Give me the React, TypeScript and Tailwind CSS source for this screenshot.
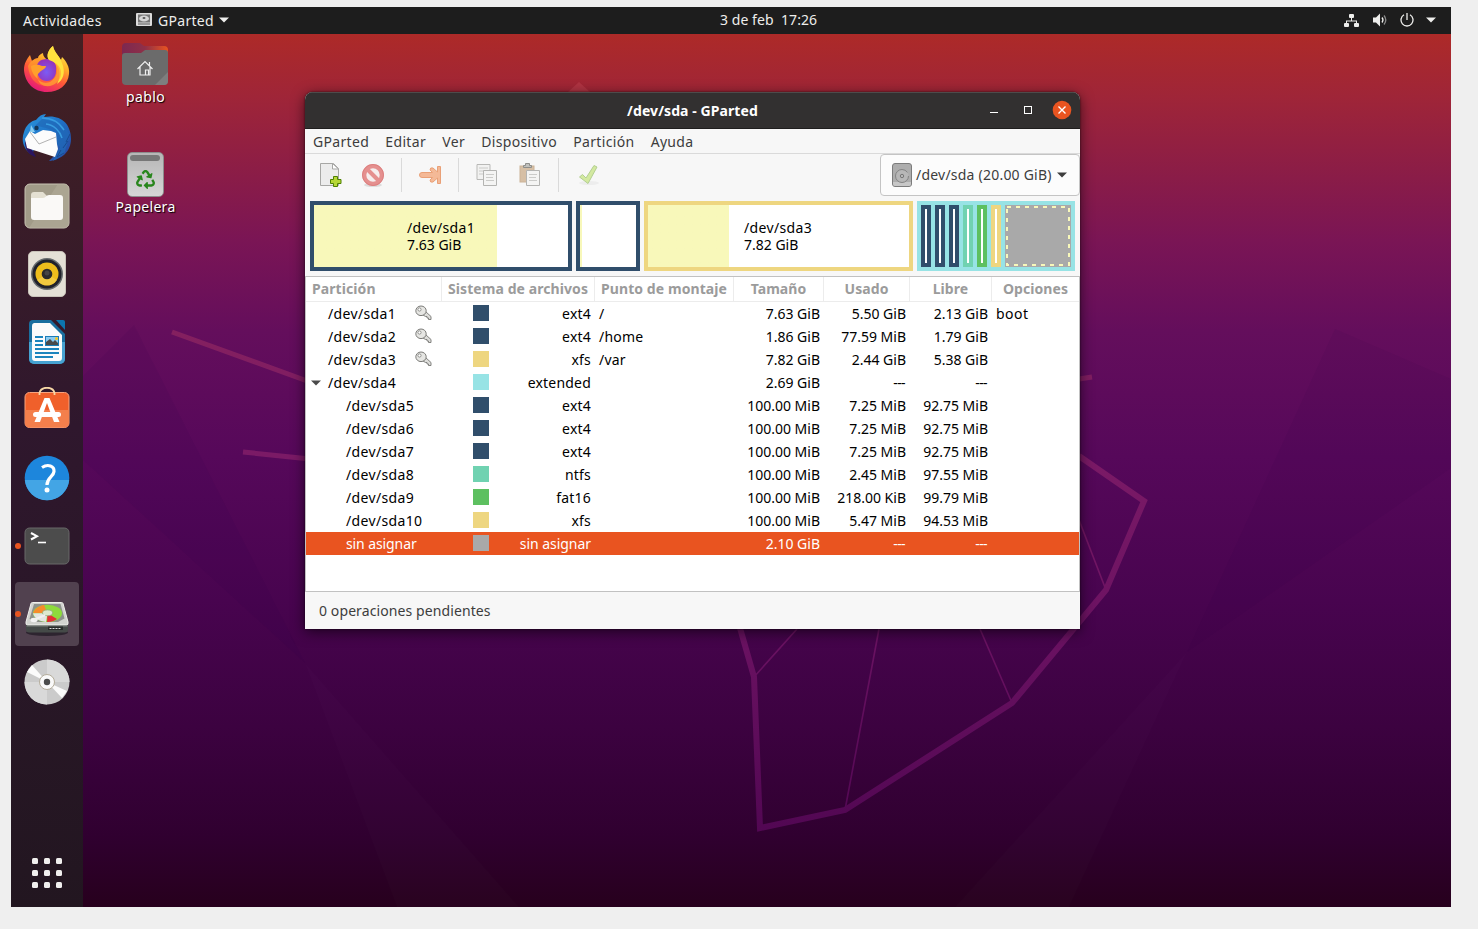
import React from "react";
import { FaRecycle } from "react-icons/fa";

const NAVY = "#304e6b";

type Row = {
  name: string;
  child?: boolean;
  locked?: boolean;
  open?: boolean;
  color: string;
  fs: string;
  mount?: string;
  size: string;
  used: string;
  free: string;
  flags?: string;
};

const rows: Row[] = [
  { name: "/dev/sda1", locked: true, color: NAVY, fs: "ext4", mount: "/", size: "7.63 GiB", used: "5.50 GiB", free: "2.13 GiB", flags: "boot" },
  { name: "/dev/sda2", locked: true, color: NAVY, fs: "ext4", mount: "/home", size: "1.86 GiB", used: "77.59 MiB", free: "1.79 GiB" },
  { name: "/dev/sda3", locked: true, color: "#eed680", fs: "xfs", mount: "/var", size: "7.82 GiB", used: "2.44 GiB", free: "5.38 GiB" },
  { name: "/dev/sda4", open: true, color: "#97e3e5", fs: "extended", size: "2.69 GiB", used: "---", free: "---" },
  { name: "/dev/sda5", child: true, color: NAVY, fs: "ext4", size: "100.00 MiB", used: "7.25 MiB", free: "92.75 MiB" },
  { name: "/dev/sda6", child: true, color: NAVY, fs: "ext4", size: "100.00 MiB", used: "7.25 MiB", free: "92.75 MiB" },
  { name: "/dev/sda7", child: true, color: NAVY, fs: "ext4", size: "100.00 MiB", used: "7.25 MiB", free: "92.75 MiB" },
  { name: "/dev/sda8", child: true, color: "#70d2b1", fs: "ntfs", size: "100.00 MiB", used: "2.45 MiB", free: "97.55 MiB" },
  { name: "/dev/sda9", child: true, color: "#5dc060", fs: "fat16", size: "100.00 MiB", used: "218.00 KiB", free: "99.79 MiB" },
  { name: "/dev/sda10", child: true, color: "#eed680", fs: "xfs", size: "100.00 MiB", used: "5.47 MiB", free: "94.53 MiB" },
];

function Caret({ className }: { className?: string }) {
  return (
    <svg width="10" height="6" viewBox="0 0 10 6" className={className}>
      <path d="M0 .5h10L5 5.5z" fill="currentColor" />
    </svg>
  );
}

function Wallpaper() {
  return (
    <svg className="absolute inset-0" width="1440" height="900" viewBox="11 7 1440 900">
      <defs>
        <linearGradient id="sky" x1="0" y1="0" x2="0" y2="1">
          <stop offset="0.03" stopColor="#ad2a28" />
          <stop offset="0.1" stopColor="#9f2538" />
          <stop offset="0.18" stopColor="#8c1d46" />
          <stop offset="0.26" stopColor="#7a1555" />
          <stop offset="0.36" stopColor="#640e5c" />
          <stop offset="0.5" stopColor="#56085a" />
          <stop offset="0.66" stopColor="#48044f" />
          <stop offset="0.8" stopColor="#3c0240" />
          <stop offset="0.92" stopColor="#300030" />
          <stop offset="1" stopColor="#27001d" />
        </linearGradient>
        <linearGradient id="outline" gradientUnits="userSpaceOnUse" x1="0" y1="330" x2="0" y2="830">
          <stop offset="0" stopColor="#84205f" />
          <stop offset=".25" stopColor="#7b1a66" />
          <stop offset=".6" stopColor="#6b1262" />
          <stop offset="1" stopColor="#520753" />
        </linearGradient>
      </defs>
      <rect x="11" y="7" width="1440" height="900" fill="url(#sky)" />
      <path d="M134 325L83 376V460L305 663z" fill="#2b0048" opacity=".08" />
      <path d="M1335 329L1451 379V468L1187 652z" fill="#2b0048" opacity=".07" />
      <path d="M305 663L519 907H397z" fill="#ffffff" opacity=".01" />
      <path d="M1187 652L1069 907H955z" fill="#ffffff" opacity=".01" />
      <path d="M568 92L579 82L590 92z" fill="#b63a49" opacity=".7" />
      <g fill="none" stroke="url(#outline)" strokeLinejoin="miter">
        <path d="M172 332L310 382M243 452L310 459" strokeWidth="5" />
        <path d="M1079 379L1092 377" strokeWidth="5" />
        <path d="M1079 456L1144 501L1106 590L1012 703L845 810L760 828L754 677L740 628" strokeWidth="6" />
        <path d="M1079 520L1106 590M980 629L1012 703M879 629L845 810M797 629L754 677" strokeWidth="1.6" />
      </g>
    </svg>
  );
}

function Firefox() {
  return (
    <svg width="48" height="48" viewBox="0 0 48 48">
      <defs>
        <linearGradient id="ff1" x1=".8" y1="0" x2=".3" y2="1">
          <stop offset="0" stopColor="#fff44f" />
          <stop offset=".35" stopColor="#ffb02a" />
          <stop offset=".62" stopColor="#ff5a36" />
          <stop offset="1" stopColor="#e3157c" />
        </linearGradient>
        <radialGradient id="ff2" cx=".5" cy=".6" r=".6">
          <stop offset="0" stopColor="#7b5cf5" />
          <stop offset="1" stopColor="#9530b8" />
        </radialGradient>
        <linearGradient id="ff3" x1="0" y1="0" x2="0" y2="1">
          <stop offset="0" stopColor="#ff9d28" />
          <stop offset="1" stopColor="#ff4a45" />
        </linearGradient>
      </defs>
      <path d="M1 24C1 17 4 13 7 9L9 15C11 13 13 12 15 12C15 10 17 8 20 7C20 10 22 13 26 14C23 10 25 4 30 0C31 6 35 9 38 14L39 11C43 15 47 21 46 28C45 39 36 46 24 46C11 46 2 37 1 24z" fill="url(#ff1)" />
      <path d="M5 20C8 14 12 13 15 13L26 14C34 14 38 20 38 27C37 35 31 40 23 40C12 40 6 31 5 20z" fill="url(#ff3)" />
      <path d="M14 23C13 17 17 13 24 13C31 13 34 18 33 25C33 31 29 35 24 35C18 35 14 31 14 23z" fill="url(#ff2)" />
      <path d="M8 20C12 18 16 19 19 20L23 20C23 23 18 24 16 27C14 28 14 31 15 33C11 30 8 25 8 20z" fill="#ffa02b" />
      <path d="M26 14C23 10 25 4 30 0C31 6 37 10 39 17C43 27 40 34 34 38C39 29 37 17 26 14z" fill="#ffe33e" />
      <path d="M32 17C36 24 34 32 27 36C22 38 17 36 15 33C16 39 23 42 30 39C41 34 40 21 32 17z" fill="#ffa930" opacity=".7" />
    </svg>
  );
}

function Thunderbird() {
  return (
    <svg width="50" height="50" viewBox="0 0 50 50">
      <defs>
        <linearGradient id="tb" x1="0" y1="0" x2="1" y2="1">
          <stop offset="0" stopColor="#2b9ae0" />
          <stop offset=".5" stopColor="#1f6fc4" />
          <stop offset="1" stopColor="#2b3f98" />
        </linearGradient>
      </defs>
      <path d="M14 7C17 3 20 1 24 1L22 4C38 1 49 10 49 26C49 38 40 47 27 48L32 43L12 36L10 42C1 36-1 27 2 19C4 12 9 8 14 7z" fill="url(#tb)" />
      <path d="M3 28C3 38 7 42 14 44L9 35z" fill="#2a1560" />
      <path d="M12 14C14 12 22 14 27 16L35 19V31L38 34L33 44L31 48L42 41L48 22L43 14L30 8L20 6z" fill="#2069b8" opacity=".75" />
      <path d="M8 18L3 26L5 35L33 44L36 36L35 31L34 20L29 18L21 17L13 21z" fill="#fcfcfc" />
      <path d="M8 19L17 31L34 24" fill="none" stroke="#a9a9a9" strokeWidth=".9" />
      <path d="M39 37L35 44L42 40M41 35L46 28M44 29L48 21" fill="none" stroke="#194a91" strokeWidth="1" />
      <circle cx="14.500" cy="15" r="2.200" fill="#153657" />
      <path d="M8 19L9 12L13 19z" fill="#89cdf0" />
      <path d="M20 5C30 5 37 9 42 17M24 11C32 12 38 18 40 25" stroke="#389ce0" strokeWidth="1.500" fill="none" />
    </svg>
  );
}

function Files() {
  return (
    <svg width="46" height="46" viewBox="0 0 46 46">
      <rect x="1" y="1" width="44" height="44" rx="5" fill="#a19b88" stroke="#c9c4b3" strokeWidth="1" />
      <path d="M34 1H40a5 5 0 0 1 5 5V40a5 5 0 0 1-5 5H5z" fill="#b0aa98" opacity=".65" />
      <path d="M7 12a3 3 0 0 1 3-3h9l4 4v6H7z" fill="#e4e0d2" />
      <path d="M7 15h12c3 0 3-3 6-3h11a3 3 0 0 1 3 3v19a3 3 0 0 1-3 3H10a3 3 0 0 1-3-3z" fill="#faf9f7" />
    </svg>
  );
}

function Rhythmbox() {
  return (
    <svg width="38" height="46" viewBox="0 0 38 46">
      <rect x=".5" y=".5" width="37" height="45" rx="4.500" fill="#e4e0d6" stroke="#c8c3b9" />
      <circle cx="19" cy="23" r="16" fill="#666b6d" />
      <circle cx="19" cy="23" r="14.500" fill="#20222b" />
      <circle cx="19" cy="23" r="11.500" fill="#edbd1c" />
      <path d="M9 29a12 12 0 0 0 20 0l-10-6z" fill="#f6d762" opacity=".5" />
      <circle cx="19" cy="23" r="5.300" fill="#292b2d" />
      <circle cx="19" cy="22" r="2.500" fill="#454545" />
    </svg>
  );
}

function Writer() {
  return (
    <svg width="38" height="46" viewBox="0 0 38 46">
      <path d="M5 1H23L37 15V40a5 5 0 0 1-5 5H6a5 5 0 0 1-5-5V5a4 4 0 0 1 4-4z" fill="#1a6f9f" />
      <path d="M1 23H37V40a5 5 0 0 1-5 5H6a5 5 0 0 1-5-5z" fill="#46a2d1" />
      <path d="M28 1h7a2 2 0 0 1 2 2v8z" fill="#0c75ae" />
      <path d="M6 4h16l12 12v23a3 3 0 0 1-3 3H7a3 3 0 0 1-3-3V7a3 3 0 0 1 2-3z" fill="#fbfbfb" />
      <path d="M7 18h8M7 22h8M7 26h8M7 30h24M7 34h24M7 38h18" stroke="#1b84bd" strokeWidth="2" />
      <rect x="17" y="17" width="14" height="10" fill="#1b7db8" />
      <rect x="18" y="18" width="12" height="8" fill="#8bcbf0" />
      <path d="M18 26v-3l4-3 3 3 2-2 3 3v2z" fill="#4a4a4a" />
      <circle cx="28.500" cy="19.500" r="1.500" fill="#f7c520" />
    </svg>
  );
}

function Software() {
  return (
    <svg width="46" height="46" viewBox="0 0 46 46">
      <rect x="1" y="5.500" width="44" height="35" rx="4.500" fill="#f0602b" stroke="#f7a37e" />
      <path d="M1 23H45V36a4.500 4.500 0 0 1-4.500 4.500H5.500a4.500 4.500 0 0 1-4.500-4.500z" fill="#f47f4c" />
      <path d="M15.500 8V6C17-1 29-1 30.500 6v2" fill="none" stroke="#f7d8a6" strokeWidth="1.800" />
      <path d="M20.500 11h5l10 24h-5.500L23 16L16 35h-5.500z" fill="#fff" />
      <rect x="9" y="25" width="28" height="5" rx="2.500" fill="#fff" />
    </svg>
  );
}

function Help() {
  return (
    <svg width="46" height="46" viewBox="0 0 46 46">
      <circle cx="23" cy="23" r="22.300" fill="#1d86dc" />
      <path d="M.800 25H45.200A22.300 22.300 0 0 1 .800 25z" fill="#43a5e5" />
      <path d="M18 12.500C24 8.500 30.500 11 30 16.500C29.500 22 23 22.500 23 30" fill="none" stroke="#fff" strokeWidth="3.200" />
      <circle cx="23" cy="35" r="2.500" fill="#fff" />
    </svg>
  );
}

function Terminal() {
  return (
    <svg width="46" height="38" viewBox="0 0 46 38">
      <rect x="1" y="1" width="44" height="36" rx="4.500" fill="#4c4c4c" stroke="#686868" />
      <path d="M7 6l6 3.200L7 12.500" stroke="#fff" strokeWidth="2" fill="none" />
      <path d="M14 15.500h8" stroke="#fff" strokeWidth="1.600" />
    </svg>
  );
}

function GPartedIcon() {
  return (
    <svg width="46" height="36" viewBox="0 0 46 36">
      <ellipse cx="23" cy="31.500" rx="21" ry="3.500" fill="#15101a" opacity=".6" />
      <path d="M2 22h42v6.500q0 3-3 3H5q-3 0-3-3z" fill="#454a48" />
      <path d="M8.500 1.500h29q1.200 0 1.500 1L44 21q.5 3-1.500 3h-39Q1.500 24 2 21L7 2.500q.3-1 1.500-1z" fill="#d2d3cf" stroke="#f0f0ec" strokeWidth="1" />
      <path d="M10 3h26.500l4 14.500L34 21H12L5.500 18z" fill="#8d918b" />
      <ellipse cx="23.500" cy="12.300" rx="14.500" ry="8.600" fill="#8edb3c" />
      <path d="M23.500 12.300L9.200 12C10 8 15 4.500 20 4z" fill="#f68c2b" />
      <path d="M23.500 12.300H9C10 17 15 20.500 22 20.900z" fill="#e3e4e2" />
      <path d="M23.500 12.300L23 20.900C28 21 31 19.500 33 18z" fill="#e32f37" />
      <ellipse cx="23.500" cy="11.800" rx="5" ry="2.900" fill="#dce9cf" stroke="#91ad82" strokeWidth=".8" />
      <ellipse cx="10" cy="19" rx="3.500" ry="2.200" fill="#f4f4f4" />
      <path d="M10 19l11-5" stroke="#f0f0f0" strokeWidth="2" />
      <path d="M2.500 25h41" stroke="#7c807d" strokeWidth="1" />
      <path d="M24 25.500h15v3.500H24z" fill="#282b2a" />
      <path d="M25.500 27.500h12" stroke="#ddd" strokeDasharray="2 1" />
    </svg>
  );
}

function Disc() {
  return (
    <svg width="46" height="46" viewBox="0 0 46 46">
      <circle cx="23" cy="23" r="22.500" fill="#cbcbcb" />
      <path d="M23 23V.500A22.500 22.500 0 0 1 45.500 23zM23 23V45.500A22.500 22.500 0 0 1 .500 23z" fill="#d9d9d9" />
      <path d="M23 23L3 13L8 6zM23 23L43 32L38 39z" fill="#fbfbfb" />
      <circle cx="23" cy="23" r="7.500" fill="#fafafa" stroke="#b5ad9b" strokeWidth="1" />
      <circle cx="23" cy="23" r="3.200" fill="#4c4c4c" />
    </svg>
  );
}

const launchers = [
  { icon: <Firefox /> },
  { icon: <Thunderbird /> },
  { icon: <Files /> },
  { icon: <Rhythmbox /> },
  { icon: <Writer /> },
  { icon: <Software /> },
  { icon: <Help /> },
  { icon: <Terminal />, running: true },
  { icon: <div className="pt-[9px]"><GPartedIcon /></div>, running: true, active: true },
  { icon: <Disc /> },
];

function Dock() {
  return (
    <nav className="relative flex w-[72px] flex-col items-center justify-between bg-linear-to-b from-[#432022] via-[#2f172d] via-45% to-[#221620] pt-1 pb-[19px]">
      <div className="flex flex-col gap-1">
        {launchers.map((l, i) => (
          <div
            key={i}
            className={
              l.active
                ? "relative flex size-16 items-center justify-center rounded bg-[#51414f]"
                : "relative flex size-16 items-center justify-center"
            }
          >
            {l.icon}
            {l.running && <span className="absolute top-[29px] left-0 size-[6px] rounded-full bg-[#e95420]" />}
          </div>
        ))}
      </div>
      <div className="grid grid-cols-3 gap-[6px]">
        {Array.from({ length: 9 }, (_, i) => (
          <span key={i} className="size-[6px] rounded-[1.500px] bg-[#f0efee]" />
        ))}
      </div>
    </nav>
  );
}

function TopBar() {
  return (
    <header className="relative flex h-[27px] items-center justify-between bg-[#1d1d1d] pr-[15px] pb-px pl-3 text-[#eeeeec]">
      <div className="flex items-center">
        <span className="w-[113px] pt-px tracking-[0.36px]">Actividades</span>
        <svg width="16" height="14" viewBox="0 0 16 14">
          <rect width="16" height="13" rx="1" fill="#dcdcdc" />
          <rect x="2" y="1.500" width="12" height="8" fill="#777" />
          <ellipse cx="8" cy="5.500" rx="5" ry="3" fill="#d5d5d5" />
          <ellipse cx="8" cy="5" rx="1.500" ry="1" fill="#555" />
          <path d="M2 11h12" stroke="#555" />
        </svg>
        <span className="ml-[6px] w-[61px] pt-px tracking-[0.3px]">GParted</span>
        <Caret />
      </div>
      <div className="absolute left-[709px] whitespace-pre tracking-[0.06px]">3 de feb  17:26</div>
      <div className="flex items-center">
        <svg width="15" height="13" viewBox="0 0 15 13" fill="currentColor">
          <rect x="5" y="0" width="5" height="4" rx="1" />
          <rect x="0" y="9" width="5" height="4" rx="1" />
          <rect x="10" y="9" width="5" height="4" rx="1" />
          <path d="M7 4h1v2.500h5V9h-1V7.500H3V9H2V6.500h5z" />
        </svg>
        <svg className="ml-[14px]" width="15" height="14" viewBox="0 0 15 14">
          <path d="M0 4.500h3L7 .500v13L3 9.500H0z" fill="currentColor" />
          <path d="M9 4.500q2 2.500 0 5" stroke="currentColor" strokeWidth="1.300" fill="none" />
          <path d="M11 2.500q3.600 4.500 0 9" stroke="#8a8a8a" strokeWidth="1.300" fill="none" />
        </svg>
        <svg className="ml-[12px]" width="14" height="14" viewBox="0 0 14 14" fill="none" stroke="currentColor" strokeWidth="1.300">
          <path d="M4 1.800a6 6 0 1 0 6 0M7 0v7" />
        </svg>
        <Caret className="ml-[12px]" />
      </div>
    </header>
  );
}

function DesktopIcons() {
  return (
    <div className="absolute top-[36px] left-[94px] flex w-[81px] flex-col items-center text-white [text-shadow:1px_1px_1px_#000]">
      <svg className="mr-px" width="48" height="43" viewBox="0 0 48 43">
        <defs>
          <linearGradient id="tab" x1="0" y1="0" x2="1" y2="0">
            <stop offset="0" stopColor="#7c2850" />
            <stop offset=".5" stopColor="#8f3048" />
            <stop offset="1" stopColor="#e95420" />
          </linearGradient>
        </defs>
        <path d="M1 4a4 4 0 0 1 4-4h14l4 3h20a4 4 0 0 1 4 4v10H1z" fill="url(#tab)" />
        <path d="M1 13a3 3 0 0 1 3-3h16l4-3h20a3 3 0 0 1 3 3v28a4 4 0 0 1-4 4H5a4 4 0 0 1-4-4z" fill="#6b6b6b" />
        <path d="M47 29V38a4 4 0 0 1-4 4H34z" fill="#7e7e7e" />
        <path d="M16.500 26L24 18.500L31.500 26M19 24v8h10v-8M28.500 23v-4M24.500 32v-5h3v5" fill="none" stroke="#eee" strokeWidth="1.200" />
      </svg>
      <span className="mt-px leading-5 tracking-[0.4px]">pablo</span>
      <div className="relative mt-[45px] mr-px flex h-[45px] w-[37px] flex-col items-center rounded-[5px] border border-[#8d8d8d] bg-linear-to-b from-[#b6b6b6] to-[#d6d6d6] pt-[2px]">
        <span className="h-[6px] w-[30px] rounded-[3px] bg-[#777]" />
        <FaRecycle className="mt-[9px] text-[#28861c]" size={19} />
      </div>
      <span className="leading-5 tracking-[0.3px]">Papelera</span>
    </div>
  );
}

function PageIcon() {
  return (
    <svg width="22" height="26" viewBox="0 0 22 26">
      <path d="M.500 1.500h13l5 5v17H.500z" fill="#ececec" stroke="#a7a7a5" />
      <path d="M12.500 1.500v5.500h6z" fill="#fff" stroke="#a7a7a5" />
      <path d="M13.500 14.500h4v3H21v4h-3.500v3h-4v-3H10.500v-4h3z" fill="#b6d735" stroke="#4e8000" />
    </svg>
  );
}

function SheetIcon({ clipboard }: { clipboard?: boolean }) {
  return (
    <svg width="22" height="24" viewBox="0 0 22 24">
      {clipboard ? (
        <>
          <rect x="1" y="3" width="14" height="16" fill="#d6bfa5" stroke="#ccb398" />
          <path d="M4.500 4.500v-2h2V.500h4v2h2v2z" fill="#c1c1bd" stroke="#8e8e8b" />
        </>
      ) : (
        <>
          <path d="M1 1.500h13v15H1z" fill="#f2f2f1" stroke="#b9b9b7" />
          <path d="M3 5h9M3 8h7M3 11h4" stroke="#cacac8" />
        </>
      )}
      <path d="M7.500 7.500h13v15h-13z" fill="#f4f4f3" stroke="#b4b4b2" />
      <path d="M10 11.500h8M10 14.500h7M10 17.500h8" stroke="#cbcbc9" />
    </svg>
  );
}

function Toolbar() {
  return (
    <div className="flex h-[44px] items-start justify-between">
      <div className="flex h-[42px] items-center pl-[15px]">
        <PageIcon />
        <svg className="ml-[20px]" width="22" height="23" viewBox="0 0 22 23">
          <ellipse cx="11" cy="21" rx="9" ry="2" fill="#ddd" />
          <circle cx="11" cy="11" r="8.800" fill="#f6eeee" stroke="#e5908f" strokeWidth="4.200" />
          <path d="M5 5l12 12" stroke="#e5908f" strokeWidth="4" />
          <circle cx="11" cy="11" r="10.500" fill="none" stroke="#d97a7a" strokeWidth=".8" />
        </svg>
        <span className="ml-[17px] h-[34px] w-px bg-[#dadada]" />
        <svg className="ml-[17px]" width="23" height="20" viewBox="0 0 23 20" fill="#f4b997" stroke="#e9a077">
          <path d="M3 7.500h10.500L11 5q0-3 3-2L18.500 7V1.500h3v17h-3V13L14 17q-3 1-3-2l2.500-2.500H3a2.500 2.500 0 0 1 0-5z" strokeLinejoin="round" />
        </svg>
        <span className="ml-[16px] h-[34px] w-px bg-[#dadada]" />
        <span className="ml-[17px]"><SheetIcon /></span>
        <span className="ml-[21px]"><SheetIcon clipboard /></span>
        <span className="ml-[17px] h-[34px] w-px bg-[#dadada]" />
        <svg className="ml-[19px]" width="22" height="22" viewBox="0 0 22 22">
          <ellipse cx="11" cy="19" rx="10" ry="2" fill="#ededed" />
          <path d="M1.500 13l3-2.500 3.500 3.500L16 1.500l3 1.500L10 19.500z" fill="#d3e9a0" stroke="#b3cf92" strokeLinejoin="round" />
        </svg>
      </div>
      <button className="flex h-[42px] w-[200px] items-center rounded border border-[#c4c4c4] bg-[#fcfcfc] pl-[11px] text-[#3d3d3d]">
        <svg width="20" height="24" viewBox="0 0 20 24">
          <rect x=".5" y=".5" width="19" height="23" rx="2.500" fill="#adadad" stroke="#7c7c7c" />
          <path d="M1 19h18v2a2 2 0 0 1-2 2H3a2 2 0 0 1-2-2z" fill="#c7c7c7" />
          <circle cx="10" cy="13" r="6.500" fill="#b7b7b7" stroke="#838383" strokeDasharray="36 5" />
          <circle cx="10" cy="13" r="1.700" fill="none" stroke="#777" />
        </svg>
        <span className="ml-1 w-[141px] text-left tracking-[0.22px]">/dev/sda (20.00 GiB)</span>
        <Caret />
      </button>
    </div>
  );
}

function DiskMap() {
  return (
    <div className="mt-[3px] flex h-[70px] gap-1 px-[5px]">
      <div className="flex w-[262px] border-4 border-[#304e6b] bg-linear-to-r from-[#f8f8ba] from-[183px] to-white to-[183px]">
        <div className="pt-[14px] pl-[93px] leading-[17px] text-black">
          <div className="tracking-[0.35px]">/dev/sda1</div>
          <div>7.63 GiB</div>
        </div>
      </div>
      <div className="w-[64px] border-4 border-[#304e6b] bg-linear-to-r from-[#f8f8ba] from-[2px] to-white to-[2px]" />
      <div className="flex w-[269px] border-4 border-[#eed680] bg-linear-to-r from-[#f8f8ba] from-[81px] to-white to-[81px]">
        <div className="pt-[14px] pl-[96px] leading-[17px] text-black">
          <div className="tracking-[0.35px]">/dev/sda3</div>
          <div>7.82 GiB</div>
        </div>
      </div>
      <div className="flex w-[158px] gap-1 bg-[#97e3e5] p-1">
        <div className="w-[10px] border-4 border-[#304e6b] bg-white" />
        <div className="w-[10px] border-4 border-[#304e6b] bg-white" />
        <div className="w-[10px] border-4 border-[#304e6b] bg-white" />
        <div className="w-[10px] border-4 border-[#70d2b1] bg-white" />
        <div className="w-[10px] border-4 border-[#5dc060] bg-white" />
        <div className="w-[10px] border-4 border-[#eed680] bg-white" />
        <svg width="66" height="62" viewBox="0 0 66 62">
          <rect width="66" height="62" fill="#a9a9a9" />
          <rect x="2" y="2" width="62" height="58" fill="none" stroke="#f8f8ba" strokeWidth="2" strokeDasharray="4 5" />
        </svg>
      </div>
    </div>
  );
}

function Key() {
  return (
    <svg className="mb-[2px]" width="17" height="17" viewBox="0 0 17 17">
      <path d="M9 8l1.500-1.500L16 11.500v3h-2.500V13H12v-1.500h-1.500L8 10z" fill="#dededb" stroke="#777774" strokeWidth=".9" />
      <ellipse cx="6" cy="5.800" rx="5.200" ry="4.800" fill="#e6e6e3" stroke="#7c7c79" />
      <circle cx="4.500" cy="4.500" r="1.600" fill="#fff" stroke="#7c7c79" strokeWidth=".8" />
    </svg>
  );
}

function Amount({ value }: { value: string }) {
  return (
    <div className={value === "---" ? "pr-[5px] text-right tracking-[-0.6px]" : "pr-[4px] text-right"}>{value}</div>
  );
}

function PartitionTable() {
  const head = "border-r border-[#ececec] flex items-center justify-center";
  const grid = "grid grid-cols-[136px_153px_139px_90px_86px_82px_87px]";
  return (
    <div className="mt-[5px] h-[316px] border border-[#c1c1c1] bg-white text-black">
      <div className={`${grid} h-[25px] border-b border-[#ececec] font-bold tracking-[0.08px] text-[#9b9b9b]`}>
        <div className="flex items-center border-r border-[#ececec] pl-[6px]">Partición</div>
        <div className={head}>Sistema de archivos</div>
        <div className={head}>Punto de montaje</div>
        <div className={head}>Tamaño</div>
        <div className={head}>Usado</div>
        <div className={head}>Libre</div>
        <div className="flex items-center justify-center">Opciones</div>
      </div>
      {rows.map((r) => (
        <div key={r.name} className={`${grid} h-[23px] leading-[24px]`}>
          <div className="flex items-center">
            <span className="flex w-[22px] pl-[5px] text-[#4a4a4a]">{r.open && <Caret />}</span>
            <span className={r.child ? "w-[87px] pl-[18px] tracking-[0.35px]" : "w-[87px] tracking-[0.35px]"}>{r.name}</span>
            {r.locked && <Key />}
          </div>
          <div className="flex items-center justify-between pr-[4px] pl-[31px]">
            <span className="mb-[2px] size-4" style={{ backgroundColor: r.color }} />
            <span className="tracking-[0.2px]">{r.fs}</span>
          </div>
          <div className="pl-[4px] tracking-[0.2px]">{r.mount}</div>
          <Amount value={r.size} />
          <Amount value={r.used} />
          <Amount value={r.free} />
          <div className="pl-[4px] tracking-[0.5px]">{r.flags}</div>
        </div>
      ))}
      <div className={`${grid} h-[23px] bg-[#e95420] leading-[24px] text-white`}>
        <div className="pl-[40px] tracking-[-0.1px]">sin asignar</div>
        <div className="flex items-center justify-between pr-[4px] pl-[31px]">
          <span className="mb-[2px] size-4 bg-[#a9a9a9]" />
          <span className="tracking-[-0.05px]">sin asignar</span>
        </div>
        <div />
        <Amount value="2.10 GiB" />
        <Amount value="---" />
        <Amount value="---" />
        <div />
      </div>
    </div>
  );
}

function GPartedWindow() {
  return (
    <main className="absolute top-[85px] left-[294px] flex h-[537px] w-[775px] flex-col overflow-hidden rounded-t-lg bg-[#f7f7f7] text-[#3d3d3d] shadow-[0_3px_14px_rgba(0,0,0,0.6),0_0_2px_rgba(0,0,0,0.7)]">
      <div className="relative flex h-[37px] shrink-0 items-center justify-center border-t border-b border-t-[#4d4b4b] border-b-[#1f1e1e] bg-[#323030] font-bold text-white">
        <span className="tracking-[0.08px]">/dev/sda - GParted</span>
        <div className="absolute right-[8px] flex items-center pb-px">
          <span className="mt-1 h-px w-2 bg-white" />
          <span className="ml-[26px] size-2 border border-white" />
          <svg className="ml-[20px]" width="20" height="20" viewBox="0 0 20 20">
            <circle cx="10" cy="10" r="9.300" fill="#e95420" />
            <path d="M6.500 6.500l7 7M13.500 6.500l-7 7" stroke="#fff" strokeWidth="1.400" />
          </svg>
        </div>
      </div>
      <div className="flex h-[25px] shrink-0 items-center gap-[16.200px] border-b border-[#dadada] pt-[2px] pl-2 tracking-[0.33px]">
        <span>GParted</span>
        <span>Editar</span>
        <span>Ver</span>
        <span>Dispositivo</span>
        <span>Partición</span>
        <span>Ayuda</span>
      </div>
      <Toolbar />
      <DiskMap />
      <PartitionTable />
      <div className="flex flex-1 items-center pl-[14px] tracking-[0.1px]">0 operaciones pendientes</div>
    </main>
  );
}

export default function App() {
  return (
    <div className="h-[929px] w-[1478px] overflow-hidden bg-[#efefef] pt-[7px] pl-[11px] font-['Noto_Sans',sans-serif] text-[14px] leading-5 whitespace-nowrap">
      <div className="relative flex h-[900px] w-[1440px] flex-col overflow-hidden">
        <Wallpaper />
        <TopBar />
        <div className="flex flex-1">
          <Dock />
        </div>
        <DesktopIcons />
        <GPartedWindow />
      </div>
    </div>
  );
}
